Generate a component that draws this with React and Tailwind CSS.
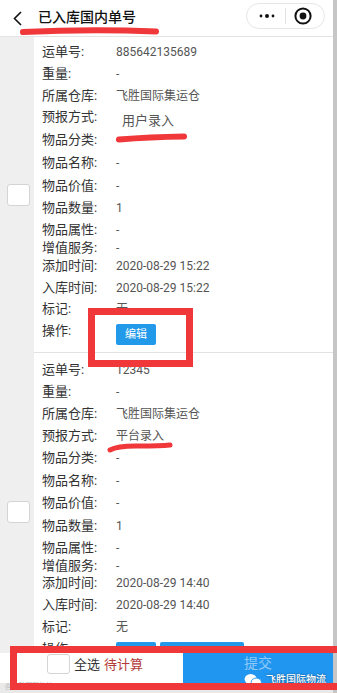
const cards = [
  {
    pt: 'pt-[4px]',
    rows: [
      ['运单号:', '885642135689', 22],
      ['重量:', '-', 22],
      ['所属仓库:', '飞胜国际集运仓', 21],
      ['预报方式:', '用户录入', 22, true],
      ['物品分类:', '-', 23],
      ['物品名称:', '-', 23],
      ['物品价值:', '-', 23],
      ['物品数量:', '1', 22],
      ['物品属性:', '-', 21],
      ['增值服务:', '-', 16],
      ['添加时间:', '2020-08-29 15:22', 20],
      ['入库时间:', '2020-08-29 15:22', 23],
      ['标记:', '无', 20],
    ],
    buttons: ['编辑'],
  },
  {
    pt: 'pt-[6px]',
    rows: [
      ['运单号:', '12345', 22],
      ['重量:', '-', 22],
      ['所属仓库:', '飞胜国际集运仓', 21],
      ['预报方式:', '平台录入', 23],
      ['物品分类:', '-', 22],
      ['物品名称:', '-', 23],
      ['物品价值:', '-', 22],
      ['物品数量:', '1', 23],
      ['物品属性:', '-', 21],
      ['增值服务:', '-', 15],
      ['添加时间:', '2020-08-29 14:40', 20],
      ['入库时间:', '2020-08-29 14:40', 23],
      ['标记:', '无', 21],
    ],
    buttons: ['编辑', '确认计算重量'],
  },
];

const CheckBox = ({ className = '' }) => (
  <div className={`rounded-[3px] border border-[#d4d4d4] bg-white ${className}`} />
);

const Row = ({ label, value, h, shifted }) => (
  <div className="flex items-center" style={{ height: h }}>
    <span className="w-[74px] shrink-0 text-[13px] text-[#333]">{label}</span>
    <span className={`text-[12px] text-[#555] ${shifted ? 'ml-[6px] mt-[8px] text-[13px]' : ''}`}>{value}</span>
  </div>
);

const Card = ({ card }) => (
  <div className="flex">
    <div className="w-[34px] shrink-0 flex items-center">
      <CheckBox className="ml-[7px] w-[23px] h-[22px]" />
    </div>
    <div className={`flex-1 bg-white border-b border-[#e2e2e2] pl-[8px] pb-[9px] ${card.pt}`}>
      {card.rows.map((r, i) => (
        <Row key={i} label={r[0]} value={r[1]} h={r[2]} shifted={r[3]} />
      ))}
      <div className="flex items-center h-[24px]">
        <span className="w-[74px] shrink-0 text-[13px] text-[#333]">操作:</span>
        <div className="flex gap-[4px] mt-[6px]">
          {card.buttons.map((b) => (
            <button key={b} className="h-[21px] px-[9px] rounded-[2px] bg-[#2399ea] text-white text-[11px] leading-[21px]">
              {b}
            </button>
          ))}
        </div>
      </div>
    </div>
  </div>
);

export default function App() {
  return (
    <div className="relative w-[337px] h-[693px] overflow-hidden bg-[#c6c6c6] font-['Roboto','Noto_Sans_CJK_SC',sans-serif]">
      <div className="w-[333px] h-full flex flex-col bg-[#efefef]">
        {/* header */}
        <div className="h-[37px] shrink-0 bg-white border-b border-[#e4e4e4] flex items-center justify-between">
          <div className="flex items-center">
            <svg className="ml-[13px] w-[9px] h-[15px]" viewBox="0 0 9 15" fill="none" stroke="#111" strokeWidth="1.6">
              <path d="M8 1 L1.5 7.5 L8 14" />
            </svg>
            <span className="ml-[16px] mb-[2px] text-[14px] font-medium text-[#111]">已入库国内单号</span>
          </div>
          <div className="mr-[8px] mb-[4px] w-[79px] h-[26px] rounded-full border border-[#e6e6e6] flex items-center">
            <svg className="ml-[12px] w-[16px] h-[6px]" viewBox="0 0 16 6" fill="#111">
              <circle cx="2" cy="3" r="1.4" />
              <circle cx="8" cy="3" r="2" />
              <circle cx="14" cy="3" r="1.4" />
            </svg>
            <div className="ml-[10px] w-px h-[16px] bg-[#e2e2e2]" />
            <svg className="ml-[8px] w-[18px] h-[18px]" viewBox="0 0 18 18">
              <circle cx="9" cy="9" r="7.6" fill="none" stroke="#111" strokeWidth="2" />
              <circle cx="9" cy="9" r="3.4" fill="#111" />
            </svg>
          </div>
        </div>

        {/* list */}
        <div className="flex-1 overflow-hidden">
          {cards.map((c, i) => (
            <Card key={i} card={c} />
          ))}
        </div>

        {/* footer */}
        <div className="h-[30px] shrink-0 flex">
          <div className="flex-1 bg-white flex items-start pt-[1px]">
            <CheckBox className="ml-[47px] w-[23px] h-[20px]" />
            <span className="ml-[4px] leading-[22px] text-[13px] text-[#333]">全选</span>
            <span className="ml-[4px] leading-[22px] text-[13px] text-[#b33a3a]">待计算</span>
          </div>
          <div className="w-[150px] bg-[#2196f0] flex justify-center">
            <span className="mt-[1px] text-[14px] leading-[18px] text-white/50">提交</span>
          </div>
        </div>
        <div className="h-[10px] shrink-0 bg-[#e9e9e9]" />
      </div>

      {/* watermark */}
      <div className="absolute left-[244px] top-[672px] flex items-center gap-[4px]">
        <svg className="w-[18px] h-[15px]" viewBox="0 0 19 16" fill="#fff">
          <ellipse cx="7" cy="6.5" rx="6.5" ry="5.5" />
          <path d="M3 10 L2 13.5 L6 11.5 Z" />
          <ellipse cx="13" cy="10" rx="5.5" ry="4.6" stroke="#2196f0" strokeWidth="1" />
          <path d="M15.5 13.5 L17 15.5 L13 14.2 Z" />
        </svg>
        <span className="text-[10px] font-medium text-white leading-[16px] [text-shadow:0_0_2px_rgba(0,0,0,0.5)]">飞胜国际物流</span>
      </div>
      <span className="absolute left-[5px] top-[682px] text-[7px] leading-[9px] text-[#b8b8b8]">@飞胜国际物流</span>

      {/* red annotations */}
      <svg className="absolute inset-0 w-[337px] h-[693px] pointer-events-none" viewBox="0 0 337 693" fill="none" stroke="#f0373a" strokeLinecap="round">
        <path d="M23 32 Q90 29 156 31.5" strokeWidth="6" />
        <path d="M119 139.5 Q150 137 184 136.5" strokeWidth="6" />
        <path d="M110 450 Q118 445.5 140 446 Q160 446 170 445" strokeWidth="5" />
        <rect x="91.5" y="311.5" width="98" height="52" strokeWidth="7" strokeLinecap="butt" />
        <rect x="13.5" y="649.5" width="330" height="37" strokeWidth="7" strokeLinecap="butt" />
      </svg>
    </div>
  );
}
